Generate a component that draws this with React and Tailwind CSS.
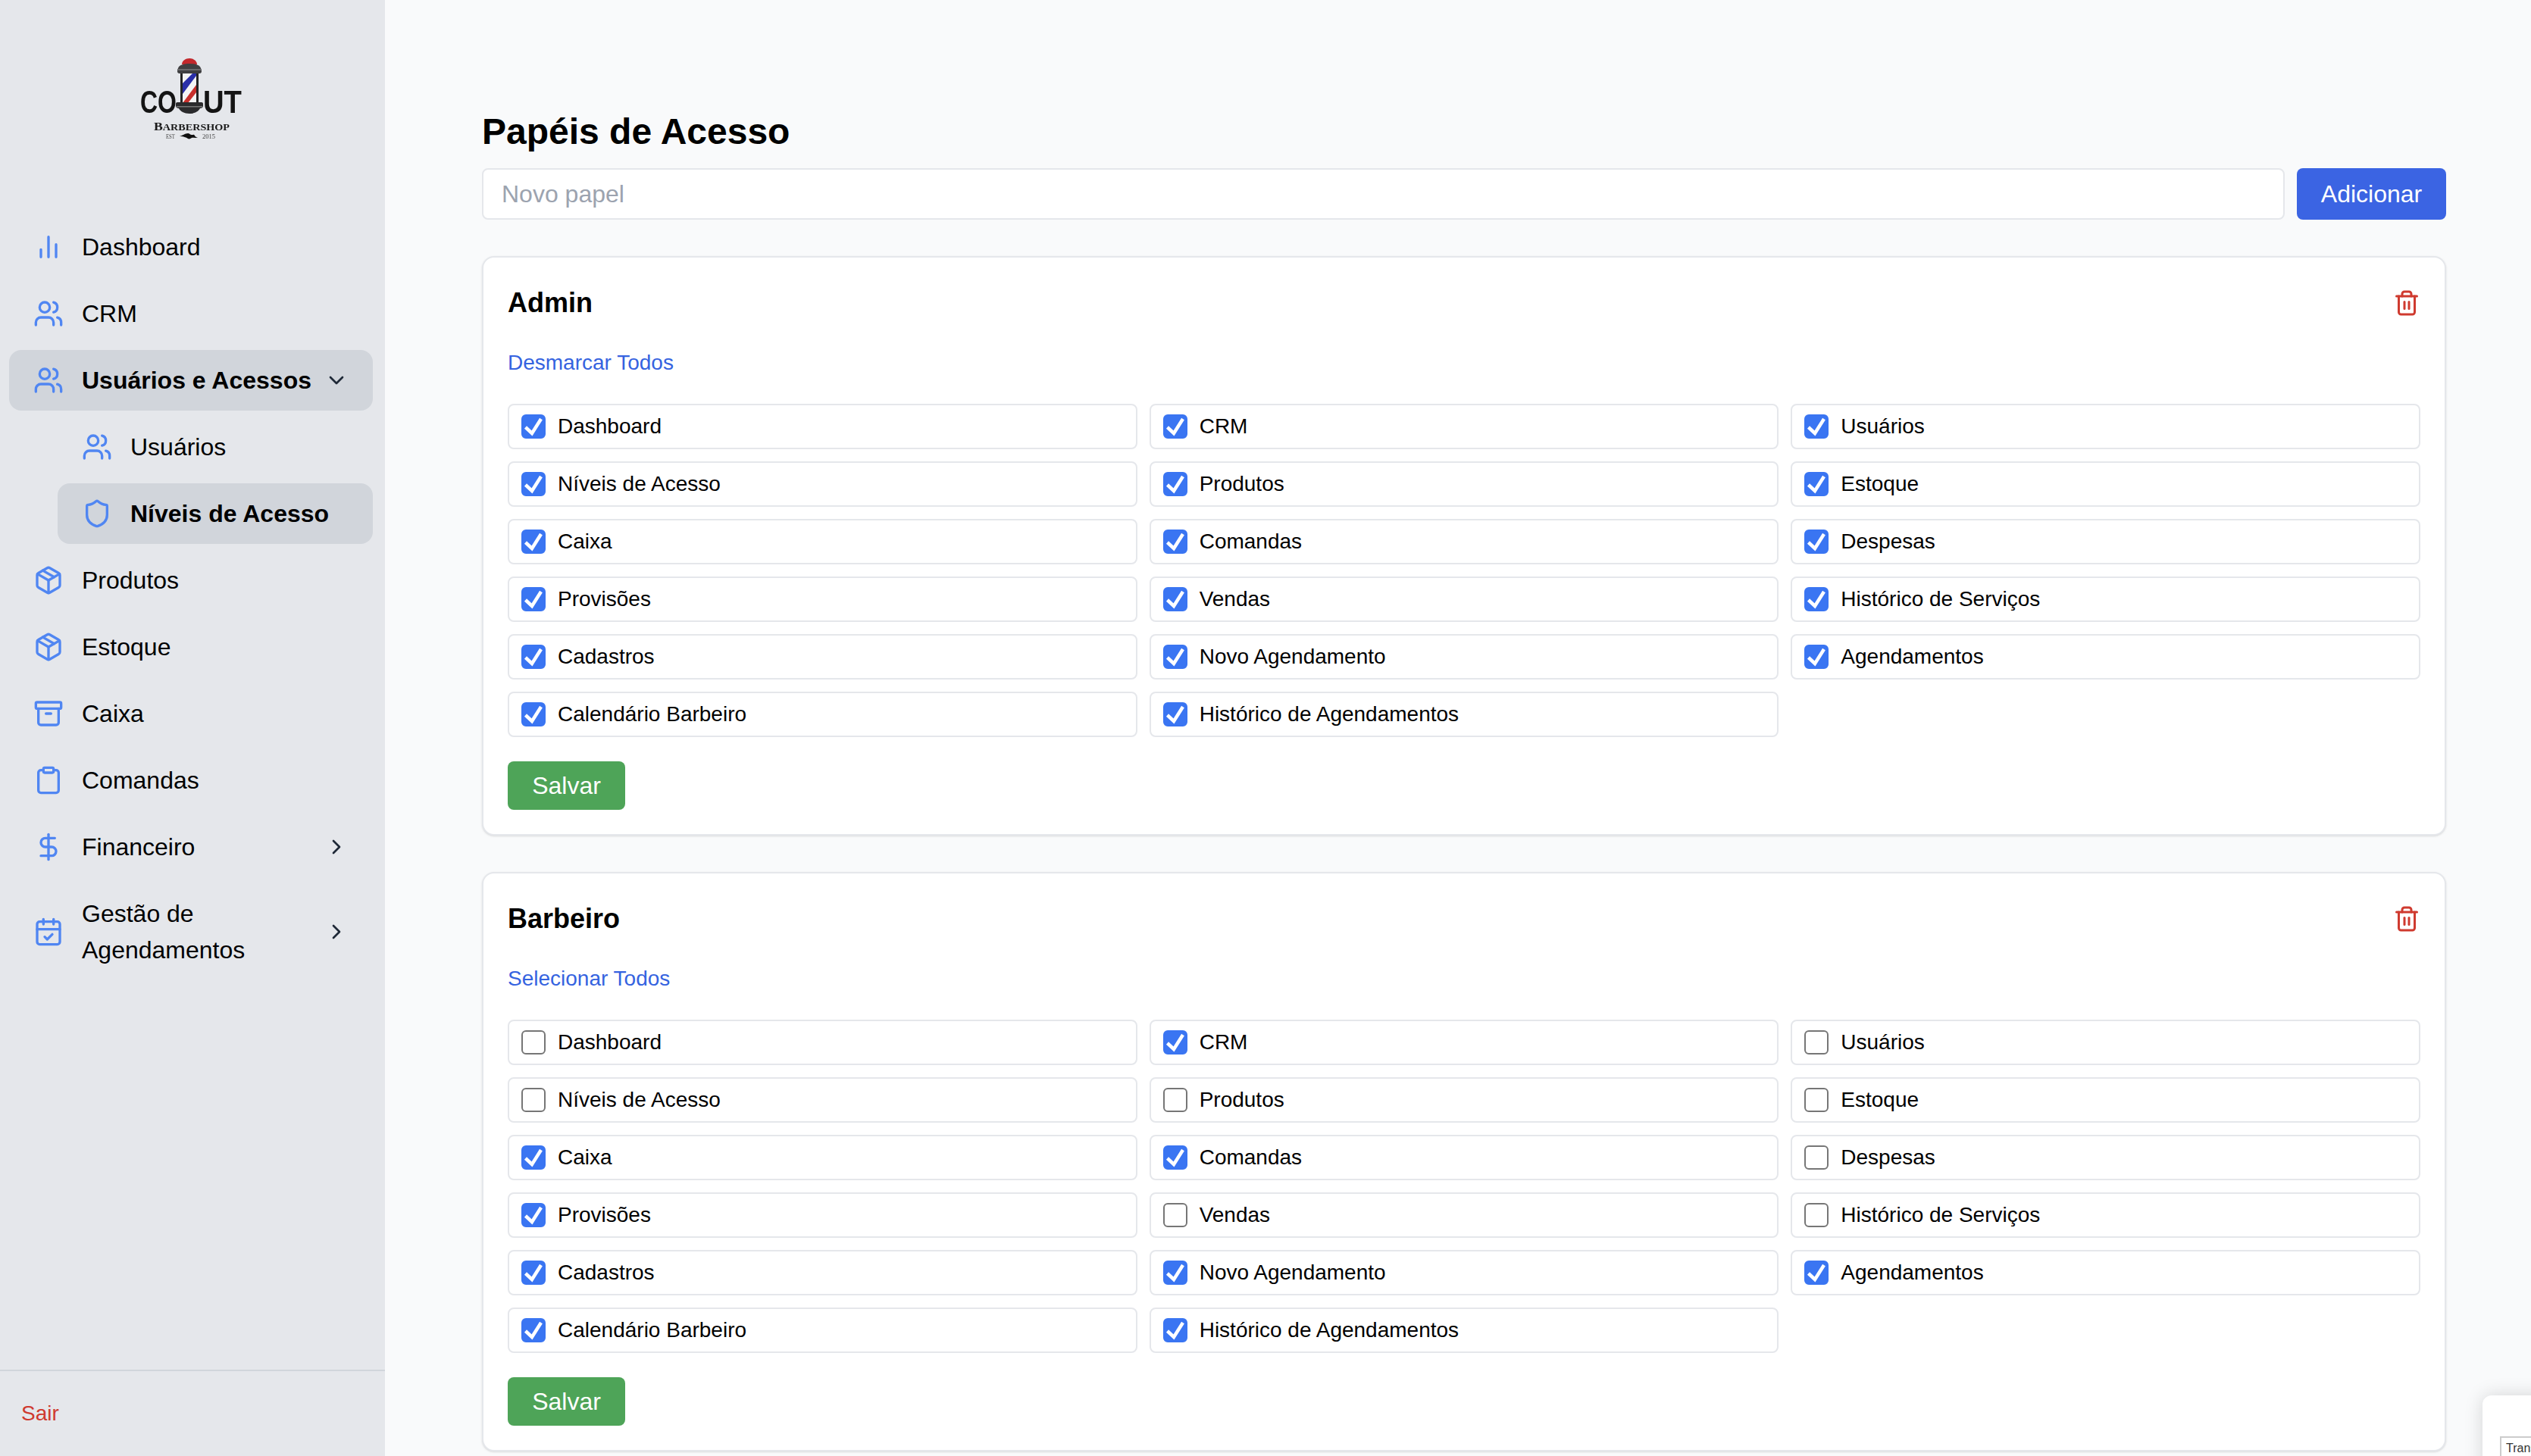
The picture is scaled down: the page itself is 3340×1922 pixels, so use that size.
import React from "react";
import { Users, Package, Shield, Archive, Clipboard, DollarSign, CalendarCheck, ChevronDown, ChevronRight, Trash2 } from "lucide-react";

const ICON = "w-10 h-10 shrink-0 text-[#5086f2]";

function Bars({ className }) {
  return (
    <svg viewBox="0 0 24 24" fill="none" stroke="currentColor" strokeWidth="2" strokeLinecap="round" strokeLinejoin="round" className={className}>
      <path d="M18 20V10M12 20V4M6 20v-6" />
    </svg>
  );
}

function Logo() {
  return (
    <svg viewBox="0 0 230 150" className="w-[230px] h-[150px]" style={{ filter: "blur(0.5px)" }}>
      <text x="55" y="99" textLength="48" lengthAdjust="spacingAndGlyphs" fontFamily="'Liberation Sans',sans-serif" fontWeight="700" fontSize="42" fill="#141414">CO</text>
      <text x="138" y="99" textLength="51" lengthAdjust="spacingAndGlyphs" fontFamily="'Liberation Sans',sans-serif" fontWeight="700" fontSize="42" fill="#141414">UT</text>
      <path d="M110 35c0-5 5-8 10-8s10 3 10 8z" fill="#c2282c" />
      <path d="M106 38c3-3 8-4 14-4s11 1 14 4c1 2 2 4 2 6 0 2-1 3-3 3h-26c-2 0-3-1-3-3 0-2 1-4 2-6z" fill="#3f3f41" />
      <rect x="104" y="41" width="32" height="2" rx="1" fill="#6a6a6c" />
      <rect x="110" y="47" width="20" height="39" fill="#f4f4f4" />
      <polygon points="111,60 124,47 129,47 129,50 111,74" fill="#2a2fa8" />
      <polygon points="111,86 129,62 129,72 118,86" fill="#c8302c" />
      <rect x="108" y="47" width="3" height="39" fill="#242424" />
      <rect x="129" y="47" width="3" height="39" fill="#242424" />
      <path d="M104 85h32c1.500 0 2 1 2 2v3c0 2-2 3-4 3-2 4-7 7-14 7s-12-3-14-7c-2 0-4-1-4-3v-3c0-1 .5-2 2-2z" fill="#2b2b2d" />
      <rect x="103" y="90" width="34" height="1.500" fill="#777" />
      <text x="73" y="122" textLength="100" lengthAdjust="spacingAndGlyphs" fontFamily="'Liberation Serif',serif" fontWeight="700" fontSize="12" fill="#1a1a1a"><tspan fontSize="15">B</tspan>ARBERSHOP</text>
      <text x="89" y="133" textLength="12" lengthAdjust="spacingAndGlyphs" fontFamily="'Liberation Serif',serif" fontSize="7.500" fill="#444">EST</text>
      <path d="M107 130c4-1 7-4 11-4 2 0 3 2 5 2s3-1 4 1 2 2 4 2c-3 2-6 0-8 1s-3 2-5 1-4-3-11-3z" fill="#111" />
      <text x="137" y="133" textLength="17" lengthAdjust="spacingAndGlyphs" fontFamily="'Liberation Serif',serif" fontSize="7.500" fill="#444">2015</text>
    </svg>
  );
}

function NavItem({ icon: Icon, label, active, chevron, tall }) {
  return (
    <div className={`flex items-center px-8 rounded-2xl text-[32px] leading-[48px] text-black ${tall ? "py-4" : "h-20"} ${active ? "bg-[#d1d5db] font-bold" : ""}`}>
      <Icon className={`${ICON} mr-6`} />
      <span className="flex-1 whitespace-nowrap">{label}</span>
      {chevron === "down" && <ChevronDown className="w-8 h-8 text-[#1f2937] shrink-0" />}
      {chevron === "right" && <ChevronRight className="w-8 h-8 text-[#1f2937] shrink-0" />}
    </div>
  );
}

function Sidebar() {
  return (
    <aside className="w-[508px] shrink-0 h-[1922px] bg-[#e5e7eb] flex flex-col">
      <div className="h-[286px] pt-[50px] pl-[130px] shrink-0">
        <Logo />
      </div>
      <nav className="flex flex-col gap-2 pl-3 pr-4 flex-1">
        <NavItem icon={Bars} label="Dashboard" />
        <NavItem icon={Users} label="CRM" />
        <NavItem icon={Users} label="Usuários e Acessos" active chevron="down" />
        <div className="ml-16 flex flex-col gap-2">
          <NavItem icon={Users} label="Usuários" />
          <NavItem icon={Shield} label="Níveis de Acesso" active />
        </div>
        <NavItem icon={Package} label="Produtos" />
        <NavItem icon={Package} label="Estoque" />
        <NavItem icon={Archive} label="Caixa" />
        <NavItem icon={Clipboard} label="Comandas" />
        <NavItem icon={DollarSign} label="Financeiro" chevron="right" />
        <NavItem icon={CalendarCheck} label={<>Gestão de<br />Agendamentos</>} chevron="right" tall />
      </nav>
      <div className="border-t-2 border-[#d1d5db] px-7 py-9 text-[28px] leading-10 text-[#cf3a2f]">Sair</div>
    </aside>
  );
}

const PERMS = [
  "Dashboard", "CRM", "Usuários",
  "Níveis de Acesso", "Produtos", "Estoque",
  "Caixa", "Comandas", "Despesas",
  "Provisões", "Vendas", "Histórico de Serviços",
  "Cadastros", "Novo Agendamento", "Agendamentos",
  "Calendário Barbeiro", "Histórico de Agendamentos",
];

function Check({ on }) {
  return (
    <span className="relative w-8 h-8 shrink-0 block">
      <input
        type="checkbox"
        readOnly
        checked={on}
        className={`block w-8 h-8 appearance-none rounded-md border-2 ${on ? "bg-[#3a75f2] border-[#3a75f2]" : "bg-white border-[#767676]"}`}
      />
      {on && (
        <svg viewBox="0 0 32 32" className="absolute inset-0 w-8 h-8" fill="none" stroke="#fff" strokeWidth="4.5">
          <path d="M5.5 17l8.5 8L26 6" />
        </svg>
      )}
    </span>
  );
}

function RoleCard({ name, link, unchecked }) {
  return (
    <section className="bg-white border-2 border-[#e5e7eb] rounded-2xl shadow-sm p-8">
      <div className="flex items-center justify-between h-14">
        <h2 className="text-[36px] leading-14 font-bold text-black">{name}</h2>
        <Trash2 className="w-9 h-9 text-[#cf3a2f]" />
      </div>
      <div className="mt-[31px] text-[28px] leading-10 text-[#3563e0]">{link}</div>
      <div className="mt-[34px] grid grid-cols-3 gap-4">
        {PERMS.map((p) => (
          <label key={p} className="flex items-center gap-4 h-[60px] px-4 bg-white border-2 border-[#e5e7eb] rounded-lg text-[28px] leading-10 text-black">
            <Check on={!unchecked.includes(p)} />
            <span>{p}</span>
          </label>
        ))}
      </div>
      <button className="block mt-8 w-[155px] h-16 bg-[#4ea458] rounded-lg text-white text-[32px]">Salvar</button>
    </section>
  );
}

export default function App() {
  return (
    <div className="relative w-[3340px] h-[1922px] overflow-hidden flex bg-[#f9fafb] font-['Liberation_Sans',Arial,sans-serif]">
      <Sidebar />
      <main className="flex-1 min-w-0 pt-[142px] pl-[128px] pr-[112px]">
        <h1 className="text-[48px] leading-16 font-bold text-black mb-4">Papéis de Acesso</h1>
        <div className="flex gap-4 mb-12">
          <input
            placeholder="Novo papel"
            className="flex-1 min-w-0 h-[68px] px-6 bg-white border-2 border-[#e5e7eb] rounded-lg text-[32px] placeholder:text-[#9ca3af]"
          />
          <button className="w-[197px] h-[68px] bg-[#3b64e3] rounded-lg text-white text-[32px]">Adicionar</button>
        </div>
        <div className="flex flex-col gap-12">
          <RoleCard name="Admin" link="Desmarcar Todos" unchecked={[]} />
          <RoleCard
            name="Barbeiro"
            link="Selecionar Todos"
            unchecked={["Dashboard", "Usuários", "Níveis de Acesso", "Produtos", "Estoque", "Despesas", "Vendas", "Histórico de Serviços"]}
          />
        </div>
      </main>
      <div className="absolute left-[3276px] top-[1842px] w-[200px] h-[120px] bg-white rounded-xl shadow-[0_0_24px_rgba(0,0,0,0.15)] pl-[23px] pt-[54px]">
        <div className="border-2 border-[#cccccc] h-[60px] pl-[6px] pt-[2px] text-[16px] text-[#333333]">Translate</div>
      </div>
    </div>
  );
}
